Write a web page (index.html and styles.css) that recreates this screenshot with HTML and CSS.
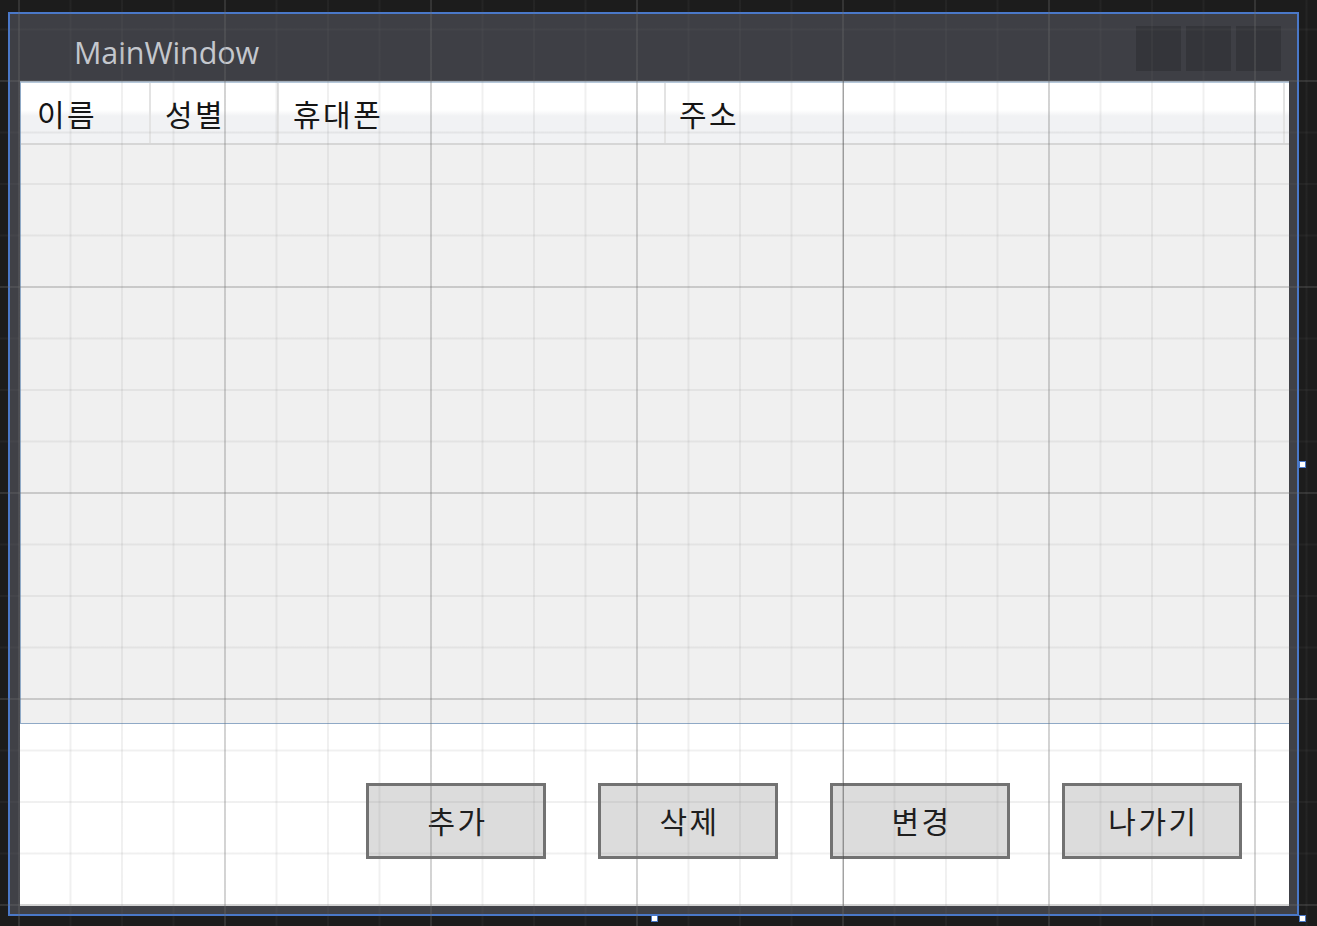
FILE: index.html
```html
<!doctype html>
<html lang="ko">

<head>
	<meta charset="utf-8">
	<title>MainWindow</title>
	<link rel="stylesheet" href="styles.css">
</head>

<body>

	<div class="stage">
		<div class="window">
			<div class="titlebar">
				<span class="title">MainWindow</span>
				<div class="caption-buttons">
					<span class="caption-btn"></span>
					<span class="caption-btn"></span>
					<span class="caption-btn"></span>
				</div>
			</div>

			<div class="client">
				<div class="datagrid">
					<div class="dg-header">
						<div class="dg-col col-name">이름</div>
						<div class="dg-col col-gender">성별</div>
						<div class="dg-col col-phone">휴대폰</div>
						<div class="dg-col col-addr">주소</div>
						<div class="dg-col col-fill"></div>
					</div>
					<div class="dg-body"></div>
				</div>

				<div class="actions">
					<button class="btn">추가</button>
					<button class="btn">삭제</button>
					<button class="btn">변경</button>
					<button class="btn">나가기</button>
				</div>

				<div class="splitter"></div>
			</div>

			<!-- resize handles of the selected window -->
			<span class="handle handle-right"></span>
			<span class="handle handle-bottom"></span>
			<span class="handle handle-corner"></span>
		</div>
	</div>

	<div class="design-grid"></div>

</body>
</html>
```

FILE: styles.css
```css
html,
body {
	margin: 0;
	height: 100%;
}

body {
	background: #1c1c1c;
	overflow: hidden;
	position: relative;
	font-family: "Noto Sans CJK KR", "Noto Sans", sans-serif;
}

.stage {
	padding: 12px 0 0 8px;
}

.window {
	position: relative;
	box-sizing: border-box;
	width: 1291px;
	height: 904px;
	border: 2px solid #4a78c8;
	background: #404147;
	display: flex;
	flex-direction: column;
}

.titlebar {
	height: 67px;
	display: flex;
	align-items: center;
	justify-content: space-between;
	padding: 0 16px 0 64px;
	background: #3e3f45;
}

.title {
	font-family: "Open Sans", "Noto Sans", sans-serif;
	font-size: 30.5px;
	color: #c4c7cd;
	margin-top: 9px;
	letter-spacing: -0.1px;
}

.caption-buttons {
	display: flex;
	gap: 5px;
	margin-top: 1px;
}

.caption-btn {
	width: 45px;
	height: 45px;
	background: #34353a;
}

.client {
	position: relative;
	flex: 1;
	margin: 0 8px 8px 10px;
	background: #ffffff;
	display: flex;
	flex-direction: column;
}

.datagrid {
	height: 643px;
	box-sizing: border-box;
	border: 1px solid #8fa9c6;
	border-top: 2px solid #b6c8da;
	border-right: none;
	display: flex;
	flex-direction: column;
}

.dg-header {
	height: 62px;
	box-sizing: border-box;
	display: flex;
	background: linear-gradient(to bottom, #ffffff 0%, #ffffff 45%, #f1f2f4 55%, #f1f2f4 100%);
	border-bottom: 2px solid #d6d6d6;
}

.dg-col {
	flex-shrink: 0;
	box-sizing: border-box;
	border-right: 2px solid #e3e3e3;
	font-size: 30px;
	letter-spacing: 2.5px;
	color: #151515;
	line-height: 60px;
	padding-left: 16px;
	white-space: nowrap;
}

.col-name { width: 130px; }
.col-gender { width: 128px; padding-left: 14px; }
.col-phone { width: 387px; padding-left: 14px; }
.col-addr { width: 619px; padding-left: 13px; }
.col-fill { flex: 1 1 auto; border-right: none; }

.dg-body {
	flex: 1;
	background: #f0f0f0;
}

.actions {
	flex: 1;
	display: flex;
	justify-content: flex-end;
	align-items: flex-start;
	gap: 52px;
	padding: 59px 47px 0 0;
}

.btn {
	flex-shrink: 0;
	width: 180px;
	height: 76px;
	box-sizing: border-box;
	border: 3px solid #727272;
	background: #dcdcdc;
	font-family: "Noto Sans CJK KR", sans-serif;
	font-size: 30px;
	letter-spacing: 2.5px;
	color: #1e1e1e;
	padding: 0 0 2px 3px;
}

.splitter {
	position: absolute;
	left: 823px;
	top: 0;
	bottom: 0;
	width: 1px;
	background: rgba(0, 0, 0, 0.28);
}

.handle {
	position: absolute;
	width: 5px;
	height: 5px;
	background: #ffffff;
	border: 1px solid #4a78c8;
}

.handle-right { right: -9px; top: 447px; }
.handle-bottom { left: 641px; bottom: -8px; }
.handle-corner { right: -9px; bottom: -8px; }

.design-grid {
	position: absolute;
	inset: 0;
	pointer-events: none;
	background-image:
		linear-gradient(to right, rgba(110, 110, 110, 0.22) 2px, transparent 2px),
		linear-gradient(to bottom, rgba(110, 110, 110, 0.22) 2px, transparent 2px),
		linear-gradient(to right, rgba(110, 110, 110, 0.1) 2px, transparent 2px),
		linear-gradient(to bottom, rgba(110, 110, 110, 0.1) 2px, transparent 2px);
	background-size: 206px 206px, 206px 206px, 51.5px 51.5px, 51.5px 51.5px;
	background-position: 18px 80px;
}
```
